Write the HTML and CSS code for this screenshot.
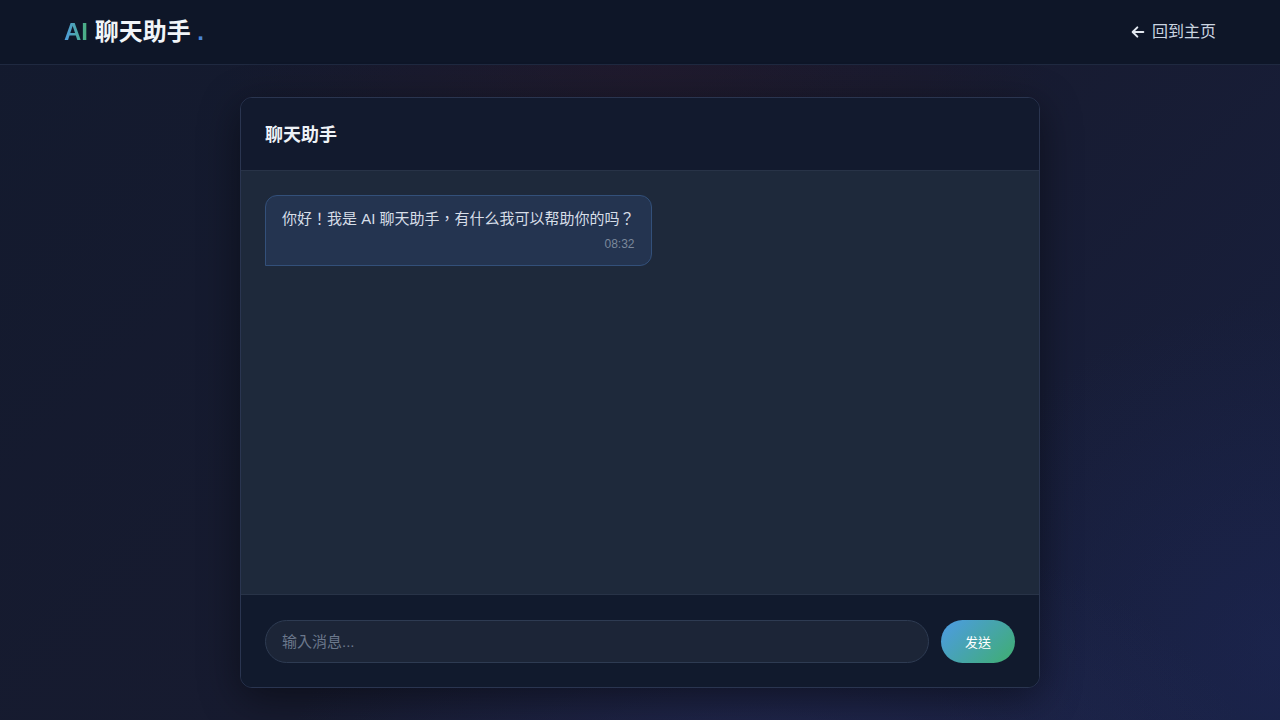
FILE: index.html
```html
<!DOCTYPE html>
<html lang="zh-TW">
<head>
<meta charset="utf-8">
<title>AI 聊天助手</title>
<link rel="stylesheet" href="styles.css">
</head>
<body>
<header class="topbar">
  <div class="logo"><span class="logo-ai">AI</span> 聊天助手 <span class="logo-dot">.</span></div>
  <a class="back" href="#">
    <svg class="back-icon" viewBox="0 0 24 24" width="16" height="16" fill="none" stroke="currentColor" stroke-width="3" stroke-linecap="round" stroke-linejoin="round"><path d="M20 12H5"/><path d="M11 5l-7 7 7 7"/></svg>
    <span>回到主页</span>
  </a>
</header>
<main class="main">
  <section class="chat">
    <div class="chat-head">聊天助手</div>
    <div class="chat-body">
      <div class="bubble">
        <div class="bubble-text">你好！我是 AI 聊天助手，有什么我可以帮助你的吗？</div>
        <div class="bubble-time">08:32</div>
      </div>
    </div>
    <div class="chat-foot">
      <input class="chat-input" type="text" placeholder="输入消息...">
      <button class="send">发送</button>
    </div>
  </section>
</main>
</body>
</html>
```
FILE: styles.css
```css
* { box-sizing: border-box; }
html, body { height: 100%; }
body {
  margin: 0;
  font-family: "Liberation Sans", Arial, "Noto Sans CJK TC", sans-serif;
  color: #e2e8f0;
  background:
    radial-gradient(ellipse 700px 400px at 60% 110%, rgba(42, 48, 100, 0.5), transparent 70%),
    radial-gradient(ellipse 500px 500px at 100% 90%, rgba(30, 40, 90, 0.45), transparent 70%),
    radial-gradient(ellipse 600px 250px at 50% 8%, rgba(55, 25, 40, 0.3), transparent 70%),
    linear-gradient(135deg, #131a2e 0%, #171b30 50%, #182040 100%);
  overflow: hidden;
}
.topbar {
  height: 65px;
  display: flex;
  align-items: center;
  justify-content: space-between;
  padding: 0 64px;
  background: #0e1628;
  border-bottom: 1px solid #1f2940;
}
.logo {
  font-size: 24px;
  font-weight: 700;
  line-height: 1;
  color: #f1f5f9;
}
.logo-ai {
  background: linear-gradient(90deg, #4f9be0, #4ab07a);
  -webkit-background-clip: text;
  background-clip: text;
  color: transparent;
}
.logo-dot { color: #4a86d6; }
.back {
  display: flex;
  align-items: center;
  gap: 6px;
  color: #cbd5e1;
  text-decoration: none;
  font-size: 16px;
  line-height: 1;
}
.back-icon { color: #e2e8f0; }
.main {
  display: flex;
  justify-content: center;
  padding-top: 32px;
}
.chat {
  width: 800px;
  height: 591px;
  display: flex;
  flex-direction: column;
  border: 1px solid #2a3550;
  border-radius: 12px;
  overflow: hidden;
  background: #111a2d;
  box-shadow: 0 10px 40px rgba(0, 0, 0, 0.45);
}
.chat-head {
  height: 73px;
  flex: none;
  display: flex;
  align-items: center;
  padding: 0 24px 3px;
  font-size: 18px;
  font-weight: 700;
  color: #eef2f7;
  background: #121a2e;
  border-bottom: 1px solid #283347;
}
.chat-body {
  flex: 1;
  background: #1e293b;
  padding: 24px;
  display: flex;
  flex-direction: column;
  align-items: flex-start;
  border-bottom: 1px solid #283347;
}
.bubble {
  background: #243450;
  border: 1px solid #33507a;
  border-radius: 12px 12px 12px 0;
  padding: 12px 16px 14px;
  max-width: 70%;
}
.bubble-text {
  font-size: 15px;
  line-height: 22px;
  color: #d7dee8;
}
.bubble-time {
  text-align: right;
  font-size: 12px;
  color: #7b889b;
  margin-top: 7px;
}
.chat-foot {
  height: 92px;
  flex: none;
  display: flex;
  align-items: center;
  gap: 12px;
  padding: 0 24px;
  background: #111a2d;
}
.chat-input {
  flex: 1;
  height: 43px;
  border-radius: 22px;
  border: 1px solid #2e3b52;
  background: #1c2537;
  color: #e2e8f0;
  padding: 0 16px;
  font-family: inherit;
  font-size: 15px;
  outline: none;
}
.chat-input::placeholder { color: #6b788c; }
.send {
  width: 74px;
  height: 43px;
  border: none;
  border-radius: 22px;
  background: linear-gradient(135deg, #4d9be6 0%, #3fae6f 100%);
  color: #ffffff;
  font-family: inherit;
  font-size: 13px;
  font-weight: 400;
}
```
